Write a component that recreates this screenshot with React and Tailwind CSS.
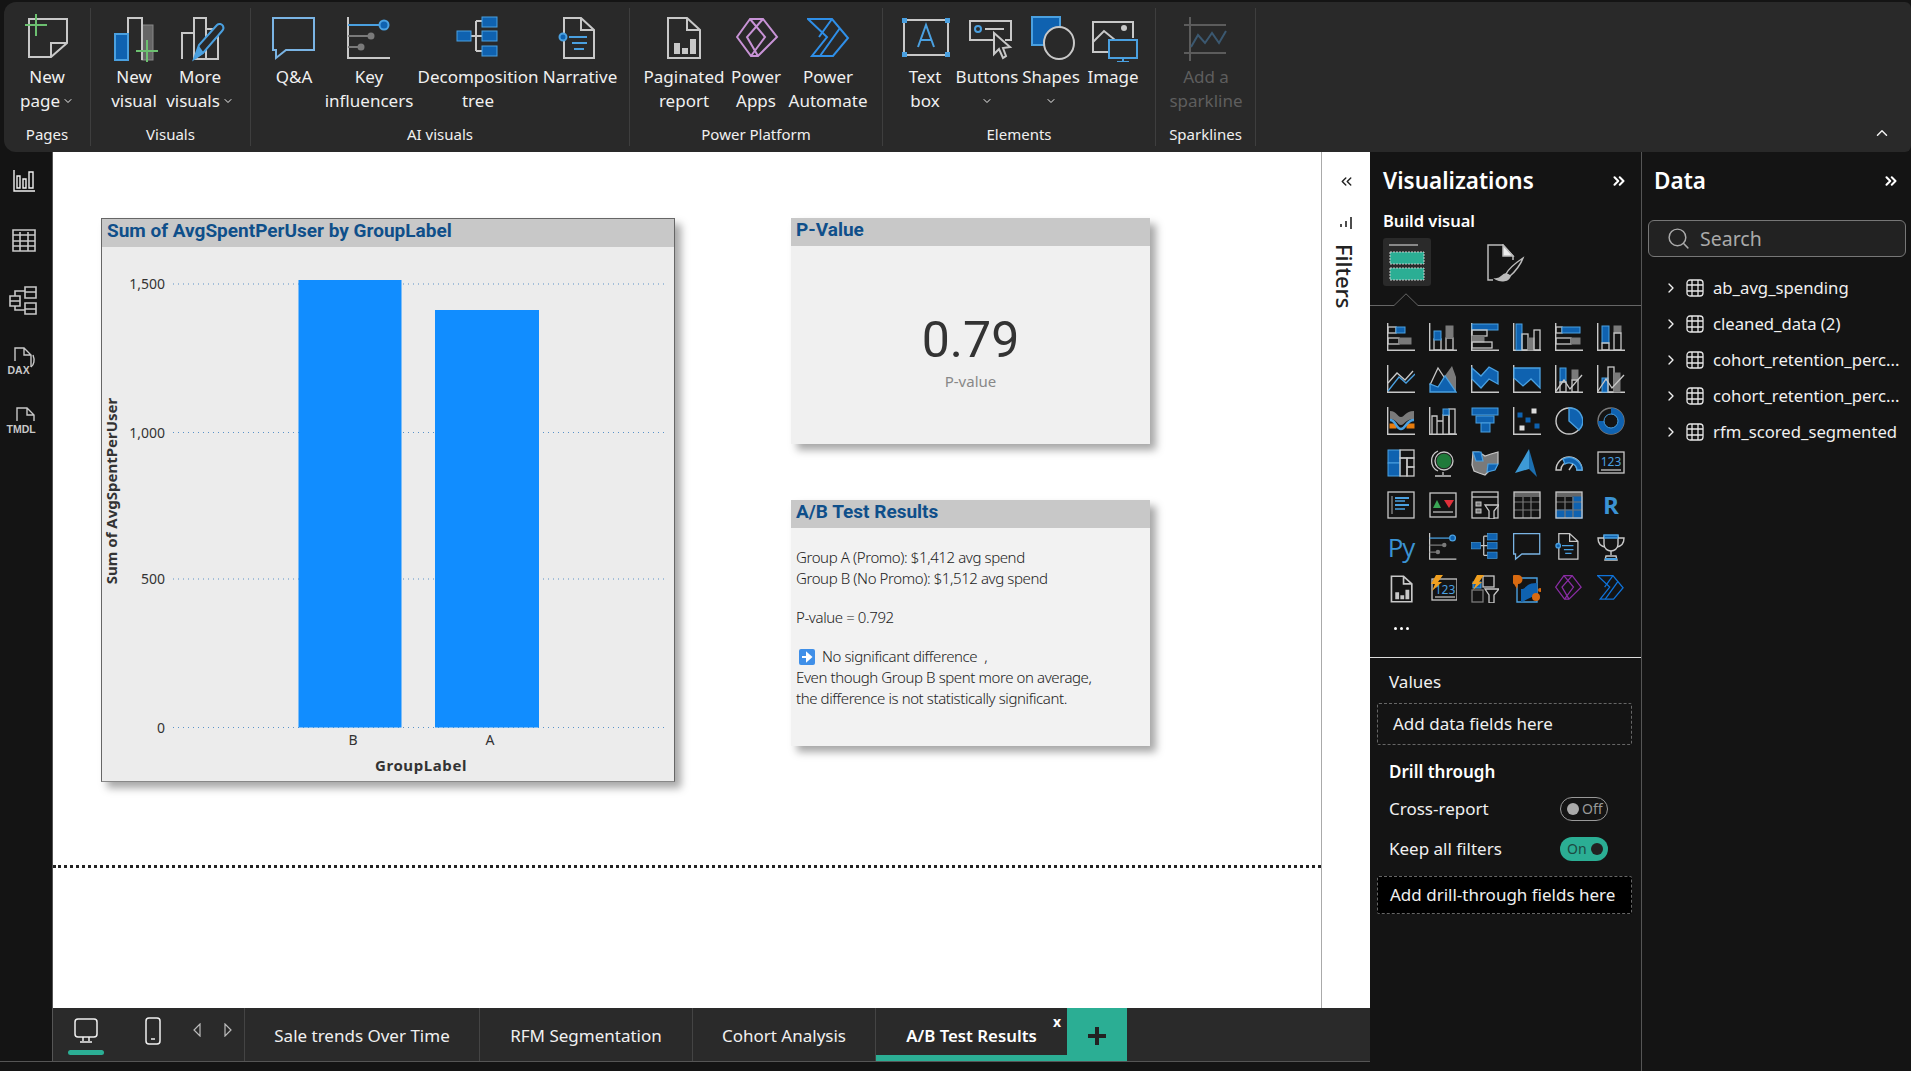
import { ChevronDown, ChevronRight, ChevronUp, ChevronsLeft, ChevronsRight, Search } from 'lucide-react';

const G = '#c8c8c8';
const D = '#7a7a7a';
const B = '#0f62b0';
const L = '#4aa0e0';

const O = (x, y, w, h, c = G) => <rect x={x} y={y} width={w} height={h} stroke={c} strokeWidth="1.3" fill="none" />;
const F = (x, y, w, h, f = B, s = L) => <rect x={x} y={y} width={w} height={h} fill={f} stroke={s} strokeWidth="1" />;
const AX = <path d="M.7 0V27.3H28" stroke={G} strokeWidth="1.4" fill="none" />;

function Ico({ s = 28, v = 28, w = 2, children, className = '' }) {
  return (
    <svg width={s} height={s} viewBox={`0 0 ${v} ${v}`} fill="none" strokeWidth={w} className={className}>
      {children}
    </svg>
  );
}

// shared between the ribbon and the visual gallery, drawn on a 44 box
const KeyInf = () => (
  <g>
    <path d="M1 0V41H43" stroke={G} />
    <path d="M1 8H32" stroke={L} />
    <circle cx="37" cy="8" r="4.5" fill={B} stroke={L} />
    <path d="M1 19H22M1 30H12" stroke={D} />
    <circle cx="24" cy="19" r="3.5" fill={D} />
    <circle cx="14" cy="30" r="3.5" fill={D} />
  </g>
);
const Decomp = () => (
  <g>
    <path d="M15 20H26M20 5V35M20 5H26M20 35H26" stroke={G} />
    {F(1, 15, 14, 10)}
    {F(26, 1, 15, 10)}
    {F(26, 15, 15, 10)}
    {F(26, 30, 15, 10)}
  </g>
);
const QA = () => <path d="M1 1H42V33H14L4 41V33H1Z" stroke="#7ab4e4" />;
const Narr = () => (
  <g>
    <path d="M6 1H23L36 13V41H6Z M23 1V13H36" stroke={G} />
    <circle cx="5" cy="20" r="3.5" fill={B} stroke={L} />
    <path d="M11 20H29M14 26H29M16 32H26" stroke={L} />
  </g>
);
const Paginated = () => (
  <g>
    <path d="M2 1H21L34 13V41H2Z M21 1V13H34" stroke={G} />
    <path d="M8 26H14V37H8ZM16 31H22V37H16ZM24 22H30V37H24Z" fill={G} />
  </g>
);
const PowerApps = ({ c }) => (
  <g stroke={c}>
    <path d="M14 1L1 19L15 38H22L41 19L27 1Z" />
    <path d="M14 1L29 19L15 38M27 1L11 19L22 38" />
  </g>
);
const Automate = ({ c }) => (
  <g stroke={c}>
    <path d="M1 1H25L41 20L26 38H5L20 19Z" />
    <path d="M25 1L12 19M33 10L13 38" />
  </g>
);

const Shared = ({ children }) => <Ico v={44} w={2}>{children}</Ico>;

const gallery = [
  <Ico>{AX}{O(1, 4, 8, 6)}{F(9, 4, 9, 6)}{O(1, 15, 11, 6)}{F(12, 15, 12, 6, D, D)}</Ico>,
  <Ico>{AX}{O(5, 16, 7, 11)}{F(5, 8, 7, 9)}{O(17, 15, 7, 12)}{F(17, 3, 7, 12, D, D)}</Ico>,
  <Ico>{AX}{F(1, 1, 26, 6)}{O(1, 7, 15, 6)}{F(1, 13, 12, 6, D, D)}{O(1, 19, 20, 6)}</Ico>,
  <Ico>{AX}{F(3, 1, 6, 26)}{O(9, 11, 6, 16)}{F(15, 15, 6, 12, D, D)}{O(21, 7, 6, 20)}</Ico>,
  <Ico>{AX}{O(1, 4, 6, 6)}{F(7, 4, 18, 6)}{O(1, 15, 15, 6)}{F(16, 15, 9, 6, D, D)}</Ico>,
  <Ico>{AX}{F(5, 3, 7, 17)}{O(5, 20, 7, 7)}{F(17, 3, 7, 7, D, D)}{O(17, 10, 7, 17)}</Ico>,

  <Ico w={1.3}>{AX}<path d="M1 18L10 8L18 15L26 6" stroke={G} /><path d="M1 26L12 12L19 18L28 9" stroke={L} /></Ico>,
  <Ico w={1.3}><path d="M15 12L23 1L27 12V27H23Z" fill={D} /><path d="M1 20L9 3L19 18" stroke={G} /><path d="M1 19V27H27L16 11L9 22Z" fill={B} stroke={L} /></Ico>,
  <Ico w={1.3}>{AX}<path d="M1 3L10 11L18 2L27 7V19L18 14L10 23L1 14Z" fill={B} stroke={L} /></Ico>,
  <Ico w={1.3}>{AX}<path d="M1 3H27V23L18 14L10 21L1 13Z" fill={B} stroke={L} /></Ico>,
  <Ico w={1.3}>{AX}{F(5, 3, 6, 14)}{O(5, 17, 6, 10)}{F(17, 5, 6, 10, D, D)}{O(17, 15, 6, 12)}<path d="M1 26L9 15L15 24L27 10" stroke={G} /></Ico>,
  <Ico w={1.3}>{AX}{F(5, 13, 6, 14)}{O(11, 2, 6, 25)}{F(17, 8, 6, 19, D, D)}<path d="M1 26L9 14L15 23L27 10" stroke={G} /></Ico>,

  <Ico>{AX}<path d="M3 4C10 4 10 10 14 10C18 10 18 4 27 4V12C18 12 18 18 14 18C10 18 10 12 3 12Z" fill={D} />{F(3, 17, 6, 4, '#e87d0d', '#e87d0d')}{F(20, 17, 7, 4, '#e87d0d', '#e87d0d')}<path d="M3 13C9 13 9 22 14 22C19 22 19 13 27 13" stroke={L} strokeWidth="2.5" /></Ico>,
  <Ico w={1.3}>{AX}<path d="M3 27V9H8V27M8 14H14V27M14 14V8H20V27" stroke={G} />{O(20, 2, 6, 25)}{F(14, 2, 6, 6)}</Ico>,
  <Ico>{F(1, 1, 26, 7)}{F(5, 9, 18, 7)}{F(10, 16, 9, 9)}</Ico>,
  <Ico>{AX}{F(5, 6, 4, 4, B, B)}{F(19, 2, 4, 4, '#ddd', '#ddd')}{F(13, 11, 4, 4, B, B)}{F(7, 19, 4, 4, '#ddd', '#ddd')}{F(22, 17, 4, 4, B, B)}</Ico>,
  <Ico w={1.4}><circle cx="14" cy="14" r="13" stroke={G} /><path d="M14 1A13 13 0 0 1 24 23L14 14Z" fill={B} stroke={L} /></Ico>,
  <Ico><circle cx="14" cy="14" r="13" stroke={D} strokeWidth="1.4" /><path d="M14 4A10 10 0 1 1 4 14" stroke={B} strokeWidth="6" /><circle cx="14" cy="14" r="7" stroke={L} strokeWidth="1" /></Ico>,

  <Ico>{F(1, 1, 12, 13)}{F(1, 14, 12, 13)}{O(13, 1, 14, 8)}{O(13, 9, 7, 18)}{O(20, 9, 7, 9)}{O(20, 18, 7, 9)}</Ico>,
  <Ico w={1.3}><circle cx="15" cy="12" r="8" fill="#1f7a3a" stroke="#222" /><path d="M9 2A11 11 0 0 0 9 22M14 23V26M6 27H22" stroke={G} /><circle cx="15" cy="12" r="9" stroke={G} /></Ico>,
  <Ico w={1.2}><path d="M2 3H8L14 7L20 5L27 3V14L24 20L18 22L14 26L8 24L3 22L1 16Z" fill={D} stroke={G} /><path d="M2 3H10L12 12L5 12ZM17 15H27L24 21L16 23Z" fill={B} stroke={L} /></Ico>,
  <Ico><path d="M16 0L2 24L16 20Z" fill="#3d9ad6" /><path d="M16 0L24 28L16 20Z" fill="#1c6fb0" /></Ico>,
  <Ico w={1.4}><path d="M1 21A13 13 0 0 1 27 21H22A8 8 0 0 0 6 21Z" stroke={G} /><path d="M8 10A13 13 0 0 1 27 21H22A8 8 0 0 0 10 15Z" fill={B} stroke={L} /><path d="M14 21L18 15" stroke={G} /></Ico>,
  <Ico w={1.3}>{O(1, 3, 26, 21)}<text x="14" y="17" textAnchor="middle" fontSize="12" fill={L}>123</text><path d="M4 21H24" stroke={G} /></Ico>,

  <Ico w={1.5}>{O(1, 1, 26, 26)}<path d="M5 5V23" stroke={D} /><path d="M8 7H22M8 14H22" stroke={L} strokeWidth="2" /><path d="M8 10H18M8 18H18" stroke={L} /></Ico>,
  <Ico>{O(1, 2, 26, 24)}<path d="M8 9L12 17H4Z" fill="#3aa655" /><path d="M15 9H25L20 17Z" fill="#e0303a" /><path d="M4 21H24" stroke={G} strokeWidth="1.2" /></Ico>,
  <Ico w={1.3}>{O(1, 1, 26, 26)}<path d="M1 6H27" stroke={G} strokeWidth="1.3" />{F(5, 11, 5, 4, D, G)}{F(5, 18, 5, 4, D, G)}<path d="M14 14H28L23 20V28H18V20Z" fill="#141414" stroke={G} /></Ico>,
  <Ico w={1.2}><path d="M1 1H27V6H1Z" fill="#666" /><path d="M1 11H27M1 19H27M10 6V27M18 6V27" stroke="#777" />{O(1, 1, 26, 26)}</Ico>,
  <Ico w={1.2}><path d="M1 1H27V6H1Z" fill="#666" />{F(18, 6, 9, 21, B, B)}{F(1, 19, 26, 8, B, B)}<path d="M1 11H27M1 19H27M10 6V27M18 6V27" stroke="#777" />{O(1, 1, 26, 26)}</Ico>,
  <div className="flex w-[28px] h-[28px] items-center justify-center text-[24px] font-bold text-[#3b93d3] font-['Open_Sans',sans-serif]">R</div>,

  <div className="flex w-[28px] h-[28px] items-center justify-center text-[26px] leading-none text-[#3b93d3] font-['Open_Sans',sans-serif] tracking-[-1px]">Py</div>,
  <Shared><KeyInf /></Shared>,
  <Shared><Decomp /></Shared>,
  <Shared><QA /></Shared>,
  <Shared><Narr /></Shared>,
  <Ico w={1.4}><path d="M7 3H21V11C21 16 17 18 14 18C11 18 7 16 7 11Z" stroke={G} /><path d="M7 2H21V5H7Z" fill={B} stroke={L} /><path d="M7 5H1C1 10 3 13 8 14M21 5H27C27 10 25 13 20 14" stroke={G} /><path d="M14 18V22M9 23H19L20 27H8Z" stroke={G} /><path d="M8 25H20V27H8Z" fill={L} /></Ico>,

  <Ico s={28} v={44} w={2.6}><g transform="translate(5 1)"><Paginated /></g></Ico>,
  <Ico w={1.2}>{O(3, 4, 25, 21)}<text x="16" y="19" textAnchor="middle" fontSize="12" fill={L}>123</text><path d="M6 22H26" stroke={G} /><path d="M7 0H14L9 7H13L3 16L6 9H2Z" fill="#f0a020" /></Ico>,
  <Ico w={1.3}>{O(12, 1, 11, 11)}{O(1, 15, 11, 12, D)}{F(2, 7, 8, 6)}<path d="M14 14H28L23 20V28H18V20Z" fill="#141414" stroke={G} /><path d="M6 0H13L8 7H11L2 15L5 9H1Z" fill="#f0a020" /></Ico>,
  <Ico w={1.4}><path d="M4 3H24V27H4Z" stroke={L} /><path d="M8 14C14 14 12 8 24 8V22C18 20 14 26 8 27Z" fill={B} /><path d="M5 0A4.5 4.5 0 0 1 5 9L4 14L1 9A4.5 4.5 0 0 1 5 0Z" fill="#d96a10" /><circle cx="23" cy="22" r="4" fill="#d96a10" /><circle cx="27" cy="15" r="2" fill="#d96a10" /></Ico>,
  <Shared><PowerApps c="#8a2da5" /></Shared>,
  <Shared><Automate c="#0f72d8" /></Shared>,
];

const ribbonIcons = {
  newPage: (
    <Ico s={48} v={48}>
      <path d="M6 5H44V29L28 43H6Z M28 43V29H44" stroke={G} />
      <path d="M13 0V22M2 11H24" stroke="#6cc070" />
    </Ico>
  ),
  newVisual: (
    <Ico s={48} v={48} className="translate-x-[1px] translate-y-[1px]">
      {F(31, 10, 11, 35, '#666', '#888')}
      <path d="M17 45V3H31V45" stroke={G} fill="#292929" />
      <rect x="4" y="19" width="13" height="26" fill={B} stroke={L} />
      <path d="M36 25V47M25 36H47" stroke="#6cc070" />
    </Ico>
  ),
  moreVisuals: (
    <Ico s={48} v={48} className="translate-x-[4px] translate-y-[1px]">
      <path d="M2 44V18H14V44H38V14H26V44M14 18V3H26V44" stroke={G} />
      <path d="M14 44L19 30L37 10C39 8 42 9 43 11C44 13 43 15 42 16L23 38Z" fill="#292929" stroke={L} />
      <path d="M14 45L19 31L24 38Z" fill={L} />
    </Ico>
  ),
  qa: <Ico s={48} v={48} className="translate-x-[2px] translate-y-[3px]"><QA /></Ico>,
  key: <Ico s={48} v={48} className="translate-x-[2px] translate-y-[3px]"><KeyInf /></Ico>,
  decomp: <Ico s={48} v={48} className="translate-x-[2px] translate-y-[2px]"><Decomp /></Ico>,
  narr: <Ico s={48} v={48} className="translate-x-[2px] translate-y-[3px]"><Narr /></Ico>,
  paginated: <Ico s={48} v={48} className="translate-x-[6px] translate-y-[3px]"><Paginated /></Ico>,
  apps: <Ico s={48} v={48} className="translate-x-[4px] translate-y-[4px]"><PowerApps c="#c893d6" /></Ico>,
  automate: <Ico s={48} v={48} className="translate-x-[3px] translate-y-[4px]"><Automate c="#2f8fe8" /></Ico>,
  textBox: (
    <Ico s={48} v={48} className="translate-x-[1px]">
      <rect x="2" y="6" width="44" height="35" stroke={G} />
      <path d="M16 33L24 11L32 33M19 26H29" stroke={L} />
      <path d="M0 4H5V9H0ZM43 4H48V9H43ZM0 38H5V43H0ZM43 38H48V43H43Z" fill={L} />
    </Ico>
  ),
  buttons: (
    <Ico s={48} v={48} className="translate-x-[5px]">
      <path d="M30 26H2V7H43V26H37" stroke={G} />
      <circle cx="10" cy="15" r="3" stroke={L} />
      <path d="M17 15H36" stroke={G} />
      <path d="M26 19L26 40L31 35L35 44L38 42L35 34L42 33Z" fill="#292929" stroke={G} />
    </Ico>
  ),
  shapes: (
    <Ico s={48} v={48} className="translate-x-[2px]">
      <rect x="3" y="3" width="28" height="28" fill={B} stroke={L} />
      <ellipse cx="30" cy="29" rx="15" ry="16" fill="#292929" stroke={G} />
    </Ico>
  ),
  image: (
    <Ico s={48} v={48} className="translate-x-[2px]">
      <path d="M20 38H2V8H42V24" stroke={G} />
      <path d="M2 28L13 17L24 26" stroke={G} />
      <circle cx="33" cy="14" r="3" fill={G} />
      <rect x="18" y="26" width="28" height="18" fill="#292929" stroke={L} />
      <path d="M32 44V48M26 48H38" stroke={L} />
    </Ico>
  ),
  spark: (
    <Ico s={48} v={48} className="translate-x-[2px] translate-y-[3px]">
      <path d="M6 0V44M0 8H42M0 36H42" stroke="#5c5c5c" />
      <path d="M7 30L14 18L21 26L28 16L35 26L42 14" stroke="#3b5870" />
    </Ico>
  ),
};

const ribbonGroups = [
  { label: 'Pages', w: 'w-[87px]', pl: 'pl-0', items: [{ icon: 'newPage', w: 'w-[86px]', a: 'New', b: 'page', chev: true }] },
  { label: 'Visuals', w: 'w-[160px]', pl: 'pl-[10px]', items: [
    { icon: 'newVisual', w: 'w-[66px]', a: 'New', b: 'visual' },
    { icon: 'moreVisuals', w: 'w-[66px]', a: 'More', b: 'visuals', chev: true },
  ] },
  { label: 'AI visuals', w: 'w-[379px]', pl: 'pl-[11px]', items: [
    { icon: 'qa', w: 'w-[64px]', a: 'Q&A' },
    { icon: 'key', w: 'w-[86px]', a: 'Key', b: 'influencers' },
    { icon: 'decomp', w: 'w-[132px]', a: 'Decomposition', b: 'tree' },
    { icon: 'narr', w: 'w-[72px]', a: 'Narrative' },
  ] },
  { label: 'Power Platform', w: 'w-[253px]', pl: 'pl-[9px]', items: [
    { icon: 'paginated', w: 'w-[90px]', a: 'Paginated', b: 'report' },
    { icon: 'apps', w: 'w-[54px]', a: 'Power', b: 'Apps' },
    { icon: 'automate', w: 'w-[90px]', a: 'Power', b: 'Automate' },
  ] },
  { label: 'Elements', w: 'w-[273px]', pl: 'pl-[12px]', items: [
    { icon: 'textBox', w: 'w-[60px]', a: 'Text', b: 'box' },
    { icon: 'buttons', w: 'w-[64px]', a: 'Buttons', chevBelow: true },
    { icon: 'shapes', w: 'w-[64px]', a: 'Shapes', chevBelow: true },
    { icon: 'image', w: 'w-[60px]', a: 'Image' },
  ] },
  { label: 'Sparklines', w: 'w-[100px]', pl: 'pl-0', items: [
    { icon: 'spark', w: 'w-[100px]', a: 'Add a', b: 'sparkline', off: true },
  ] },
];

function RibbonItem({ item }) {
  return (
    <div className={`${item.w} flex flex-col items-center shrink-0`}>
      <div className="h-[48px] flex items-center justify-center">{ribbonIcons[item.icon]}</div>
      <div className={`mt-[3px] text-[17px] leading-[24px] text-center whitespace-nowrap ${item.off ? 'text-[#5e5e5e]' : 'text-[#f0f0f0]'}`}>
        <div>{item.a}</div>
        {item.b && (
          <div className="flex items-center justify-center gap-[2px]">
            {item.b}
            {item.chev && <ChevronDown size={12} strokeWidth={2} />}
          </div>
        )}
        {item.chevBelow && (
          <div className="flex h-[24px] items-center justify-center">
            <ChevronDown size={12} strokeWidth={2} />
          </div>
        )}
      </div>
    </div>
  );
}

function Ribbon() {
  return (
    <div className="pt-[2px] pl-[4px] h-[152px] shrink-0">
      <div className="h-[150px] bg-[#292929] rounded-l-[12px] rounded-r-[6px] flex py-[6px] relative">
        {ribbonGroups.map((g) => (
          <div key={g.label} className={`${g.w} shrink-0 border-r border-[#3e3e3e] flex flex-col`}>
            <div className={`flex h-[114px] pt-[6px] ${g.pl}`}>
              {g.items.map((it) => <RibbonItem key={it.icon} item={it} />)}
            </div>
            <div className="h-[24px] flex items-center justify-center text-[15px] text-[#f0f0f0] whitespace-nowrap">{g.label}</div>
          </div>
        ))}
        <div className="ml-auto self-end mr-[20px] mb-[4px] text-[#f0f0f0]">
          <ChevronUp size={18} strokeWidth={2} />
        </div>
      </div>
    </div>
  );
}

function LeftRail() {
  const icons = [
    <svg width="24" height="24" viewBox="0 0 24 24" fill="none" stroke="#f0f0f0" strokeWidth="1.4"><path d="M2 0V21H23M5 6H8V18H5ZM11 9H14V18H11ZM17 2H21V18H17Z" /></svg>,
    <svg width="26" height="26" viewBox="0 0 26 26" fill="none" stroke={G} strokeWidth="1.6" className="-translate-y-[2px]"><path d="M2 3H24V24H2ZM2 8H24M2 14H24M2 19H24M9 5V24M17 5V24" /></svg>,
    <svg width="30" height="30" viewBox="0 0 30 30" fill="none" stroke={G} strokeWidth="1.6" className="-translate-y-[1px]"><path d="M1 10H11V20H1ZM1 15H11M16 1H27V12H16ZM16 6H27M16 17H27V28H16ZM16 23H27M6 10V5H16M6 20V24H16" /></svg>,
    <div className="flex flex-col items-center relative w-[30px] h-[30px]">
      <svg width="30" height="26" viewBox="0 0 30 26" fill="none" stroke={G} strokeWidth="1.4"><path d="M6 14V1H15L22 8V20M15 1V8H22M24 8C26 13 25 18 22 20" /></svg>
      <span className="absolute left-[-1px] bottom-[2px] text-[10.5px] font-bold leading-none text-[#c8c8c8] font-['Liberation_Sans',sans-serif]">DAX</span>
    </div>,
    <div className="flex flex-col items-center relative w-[30px] h-[30px]">
      <svg width="30" height="26" viewBox="0 0 30 26" fill="none" stroke={G} strokeWidth="1.4"><path d="M8 14V1H18L25 8V14M18 1V8H25" /></svg>
      <span className="absolute left-[-2px] bottom-[3px] text-[10.5px] font-bold leading-none text-[#c8c8c8] font-['Liberation_Sans',sans-serif]">TMDL</span>
    </div>,
  ];
  return (
    <div className="w-[53px] shrink-0 border-r border-[#555] flex flex-col">
      {icons.map((ic, i) => (
        <div key={i} className="h-[60px] w-[47px] flex items-center justify-center">{ic}</div>
      ))}
    </div>
  );
}

function CardHeader({ children }) {
  return (
    <div className="h-[28px] bg-[#c8c8c8] px-[5px] pb-[4px] flex items-center text-[19px] font-bold text-[#0f4f8a] font-['Roboto',sans-serif] whitespace-nowrap">
      {children}
    </div>
  );
}

function BarChart() {
  const ticks = [
    { label: '1,500', y: 37 },
    { label: '1,000', y: 185.5 },
    { label: '500', y: 332 },
    { label: '0', y: 480.5 },
  ];
  return (
    <svg width="572" height="535" className="block">
      {ticks.map((t) => (
        <g key={t.label}>
          <line x1="71" x2="566" y1={t.y} y2={t.y} stroke="#5a92c8" strokeWidth="1" strokeDasharray="1 4" />
          <text x="63" y={t.y + 5} textAnchor="end" fontSize="14" fill="#333">{t.label}</text>
        </g>
      ))}
      <rect x="196.5" y="33" width="103" height="447.5" fill="#118dff" />
      <rect x="333" y="63" width="104" height="417.5" fill="#118dff" />
      <text x="251" y="498" textAnchor="middle" fontSize="14" fill="#333">B</text>
      <text x="388" y="498" textAnchor="middle" fontSize="14" fill="#333">A</text>
      <text x="319" y="524" textAnchor="middle" fontSize="15" fontWeight="700" fill="#333" letterSpacing=".6">GroupLabel</text>
      <text transform="translate(15 244) rotate(-90)" textAnchor="middle" fontSize="15" fontWeight="700" fill="#333">Sum of AvgSpentPerUser</text>
    </svg>
  );
}

function Canvas() {
  return (
    <div className="flex-1 bg-white flex flex-col pt-[66px]">
      <div className="flex h-[564px] pl-[48px] gap-[116px]">
        <div className="w-[574px] h-[564px] bg-[#ececec] border border-[#666] border-b-[#888] shadow-[6px_6px_8px_rgba(0,0,0,0.35)]">
          <CardHeader>Sum of AvgSpentPerUser by GroupLabel</CardHeader>
          <BarChart />
        </div>
        <div className="w-[359px] flex flex-col gap-[56px]">
          <div className="h-[226px] bg-[#f0f0f0] shadow-[6px_6px_8px_rgba(0,0,0,0.35)]">
            <CardHeader>P-Value</CardHeader>
            <div className="flex flex-col items-center pt-[58px]">
              <div className="text-[50px] leading-[72px] font-normal text-[#333] font-['Roboto',sans-serif]">0.79</div>
              <div className="text-[15px] leading-[20px] text-[#888] -mt-[5px]">P-value</div>
            </div>
          </div>
          <div className="h-[246px] bg-[#f2f2f2] shadow-[6px_6px_8px_rgba(0,0,0,0.35)]">
            <CardHeader>A/B Test Results</CardHeader>
            <div className="px-[5px] pt-[19px] text-[15px] leading-[21px] font-light text-[#222] tracking-[-0.4px] whitespace-nowrap">
              <div>Group A (Promo): $1,412 avg spend</div>
              <div>Group B (No Promo): $1,512 avg spend</div>
              <div className="mt-[18px]">P-value = 0.792</div>
              <div className="mt-[18px] flex items-center">
                <svg width="16" height="16" viewBox="0 0 16 16" className="ml-[3px] mr-[7px]">
                  <rect width="16" height="16" rx="2" fill="#3f8fe8" />
                  <path d="M3 8H10M8 4.5L12 8L8 11.5Z" stroke="#fff" strokeWidth="2" fill="#fff" />
                </svg>
                No significant difference&nbsp;&nbsp;,
              </div>
              <div>Even though Group B spent more on average,</div>
              <div>the difference is not statistically significant.</div>
            </div>
          </div>
        </div>
      </div>
      <div className="mt-[83px] border-t-[3px] border-dotted border-[#222]" />
    </div>
  );
}

function FilterPane() {
  return (
    <div className="w-[49px] shrink-0 bg-white border-l border-[#aaa] flex flex-col items-center pt-[21px] text-[#222]">
      <ChevronsLeft size={17} strokeWidth={2} />
      <svg width="12" height="12" viewBox="0 0 12 12" className="mt-[27px]" stroke="#222" strokeWidth="1.6">
        <path d="M1 7V10M6 4V10M11 0V12" />
      </svg>
      <div className="mt-[15px] [writing-mode:vertical-rl] text-[22px] font-medium leading-none -ml-[3px]">Filters</div>
    </div>
  );
}

function TabBar() {
  const tabs = [
    { name: 'Sale trends Over Time', w: 'w-[235px]' },
    { name: 'RFM Segmentation', w: 'w-[213px]' },
    { name: 'Cohort Analysis', w: 'w-[183px]' },
  ];
  return (
    <div className="h-[53px] shrink-0 bg-[#2a2a2a] flex text-[17px] text-[#f0f0f0]">
      <div className="w-[192px] shrink-0 border-r border-[#444] flex items-start pl-[15px]">
        <div className="w-[36px] flex flex-col items-center pt-[10px]">
          <svg width="26" height="26" viewBox="0 0 26 26" fill="none" stroke="#f0f0f0" strokeWidth="1.5">
            <rect x="2" y="1" width="22" height="18" rx="3" />
            <path d="M10 19V23M16 19V23M7 24H19" />
          </svg>
          <div className="w-[36px] h-[5px] rounded-full mt-[6px] bg-[#2bae94]" />
        </div>
        <svg width="18" height="28" viewBox="0 0 18 28" fill="none" stroke="#f0f0f0" strokeWidth="1.5" className="mt-[9px] ml-[40px]">
          <rect x="2" y="1" width="14" height="26" rx="3" />
          <path d="M7 22H11" />
        </svg>
        <svg width="8" height="14" viewBox="0 0 8 14" fill="none" stroke="#bbb" strokeWidth="1.2" className="mt-[15px] ml-[31px]">
          <path d="M7 1V13L1 7Z" />
        </svg>
        <svg width="8" height="14" viewBox="0 0 8 14" fill="none" stroke="#bbb" strokeWidth="1.2" className="mt-[15px] ml-[23px]">
          <path d="M1 1V13L7 7Z" />
        </svg>
      </div>
      {tabs.map((t) => (
        <div key={t.name} className={`${t.w} shrink-0 border-r border-[#444] flex items-center justify-center pt-[2px] whitespace-nowrap`}>
          {t.name}
        </div>
      ))}
      <div className="w-[191px] shrink-0 relative flex items-center justify-center pt-[2px] text-[16.8px] font-semibold text-white whitespace-nowrap">
        A/B Test Results
        <span className="absolute right-[6px] top-[4px] text-[14px] leading-[20px] font-bold">x</span>
        <div className="absolute left-0 right-0 bottom-0 h-[6px] bg-[#2bae94]" />
      </div>
      <div className="w-[60px] shrink-0 bg-[#2bae94] flex items-center justify-center pt-[2px]">
        <svg width="18" height="18" viewBox="0 0 18 18" fill="#222"><path d="M7 0H11V7H18V11H11V18H7V11H0V7H7Z" /></svg>
      </div>
    </div>
  );
}

function VisualizationsPane() {
  return (
    <div className="w-[271px] shrink-0 flex flex-col text-[#f0f0f0]">
      <div className="h-[60px] shrink-0 flex items-center justify-between pl-[13px] pr-[13px] pb-[2px]">
        <span className="text-[22.5px] font-semibold text-white">Visualizations</span>
        <ChevronsRight size={18} strokeWidth={2.8} className="text-white" />
      </div>
      <div className="pl-[13px] text-[16.5px] leading-[18px] font-semibold text-white">Build visual</div>
      <div className="pl-[13px] mt-[8px] flex">
        <div className="w-[48px] h-[48px] bg-[#2a2a2a] rounded-[3px]">
          <svg width="48" height="48" viewBox="0 0 48 48">
            <path d="M6 7H35" stroke="#aaa" strokeWidth="1.5" />
            <rect x="7" y="14" width="34" height="12" fill="#2bae94" stroke="#ccc" strokeDasharray="2 1" />
            <rect x="7" y="30" width="34" height="12" fill="#2bae94" stroke="#ccc" strokeDasharray="2 1" />
          </svg>
        </div>
        <svg width="38" height="38" viewBox="0 0 38 38" fill="none" stroke="#bbb" strokeWidth="1.5" className="ml-[56px] mt-[6px]">
          <path d="M6 36H1V1H16L26 12V16" />
          <path d="M16 1L26 12H16Z" fill="#eee" />
          <path d="M36 14C30 18 22 24 19 30L23 32C28 28 34 20 36 14Z" />
          <path d="M19 30C15 30 15 35 9 35C14 38 22 37 23 32Z" fill="#bbb" />
        </svg>
      </div>
      <svg width="271" height="13" viewBox="0 0 271 13" fill="none" className="mt-[7px] block shrink-0">
        <path d="M0 12.5H24L36 .8L48 12.5H271" stroke="#666" />
      </svg>
      <div className="grid grid-cols-[repeat(6,28px)] grid-rows-[repeat(7,28px)] gap-[14px] pl-[17px] mt-[17px]">
        {gallery.map((ic, i) => <div key={i}>{ic}</div>)}
      </div>
      <div className="pl-[24px] mt-[21px] h-[8px] flex items-center gap-[3px]">
        <span className="w-[3px] h-[3px] rounded-full bg-white" />
        <span className="w-[3px] h-[3px] rounded-full bg-white" />
        <span className="w-[3px] h-[3px] rounded-full bg-white" />
      </div>
      <div className="mt-[25px] border-t border-[#ddd]" />
      <div className="pl-[19px] mt-[12px] text-[17px] leading-[24px]">Values</div>
      <div className="ml-[7px] w-[255px] h-[42px] mt-[9px] border border-dashed border-[#666] rounded-[2px] pl-[15px] flex items-center text-[17px]">Add data fields here</div>
      <div className="pl-[19px] mt-[15px] text-[17px] leading-[24px] font-semibold text-white">Drill through</div>
      <div className="pl-[19px] mt-[13px] h-[24px] flex items-center text-[17px]">
        <span className="w-[171px]">Cross-report</span>
        <div className="w-[48px] h-[24px] rounded-full border border-[#999] flex items-center pl-[6px] text-[14px] text-[#999] leading-none">
          <span className="w-[12px] h-[12px] rounded-full bg-[#aaa] mr-[3px]" />Off
        </div>
      </div>
      <div className="pl-[19px] mt-[16px] h-[24px] flex items-center text-[17px]">
        <span className="w-[171px]">Keep all filters</span>
        <div className="w-[48px] h-[24px] rounded-full bg-[#2bae94] flex items-center pl-[7px] text-[14px] text-[#1c4a42] leading-none">
          On<span className="w-[12px] h-[12px] rounded-full bg-[#222] ml-[4px]" />
        </div>
      </div>
      <div className="ml-[7px] w-[255px] h-[38px] mt-[15px] bg-black border border-dashed border-[#666] rounded-[2px] pl-[12px] flex items-center text-[17px] whitespace-nowrap">Add drill-through fields here</div>
    </div>
  );
}

function TableIcon() {
  return (
    <svg width="18" height="18" viewBox="0 0 18 18" fill="none" stroke="#e8e8e8" strokeWidth="1.3">
      <rect x="1" y="1" width="16" height="16" rx="3" />
      <path d="M1 6H17M1 12H17M6 1V17M12 1V17" />
    </svg>
  );
}

function DataPane() {
  const rows = ['ab_avg_spending', 'cleaned_data (2)', 'cohort_retention_perc...', 'cohort_retention_perc...', 'rfm_scored_segmented'];
  return (
    <div className="flex-1 border-l border-[#555] flex flex-col text-[#f0f0f0]">
      <div className="h-[60px] shrink-0 flex items-center justify-between pl-[12px] pr-[11px] pb-[2px]">
        <span className="text-[22.5px] font-semibold text-white">Data</span>
        <ChevronsRight size={18} strokeWidth={2.8} className="text-white" />
      </div>
      <div className="ml-[6px] mr-[5px] mt-[8px] h-[37px] rounded-[6px] border border-[#777] bg-[#222] flex items-center pl-[17px] text-[19.5px] text-[#aaa]">
        <Search size={25} strokeWidth={1.4} className="mr-[9px]" />
        Search
      </div>
      <div className="mt-[13px] flex flex-col">
        {rows.map((r, i) => (
          <div key={i} className="h-[36px] flex items-center text-[16.7px] whitespace-nowrap pl-[21px]">
            <ChevronRight size={16} strokeWidth={2} className="mr-[7px]" />
            <TableIcon />
            <span className="ml-[9px]">{r}</span>
          </div>
        ))}
      </div>
    </div>
  );
}

export default function App() {
  return (
    <div className="w-[1911px] h-[1071px] overflow-hidden bg-[#141414] flex flex-col font-['Noto_Sans',sans-serif]">
      <Ribbon />
      <div className="flex flex-1 min-h-0">
        <div className="w-[1370px] shrink-0 flex flex-col">
          <div className="flex flex-1 min-h-0">
            <LeftRail />
            <div className="flex-1 flex flex-col min-w-0">
              <div className="flex flex-1 min-h-0">
                <Canvas />
                <FilterPane />
              </div>
              <TabBar />
            </div>
          </div>
          <div className="h-[10px] shrink-0 border-t border-[#555]" />
        </div>
        <VisualizationsPane />
        <DataPane />
      </div>
    </div>
  );
}
